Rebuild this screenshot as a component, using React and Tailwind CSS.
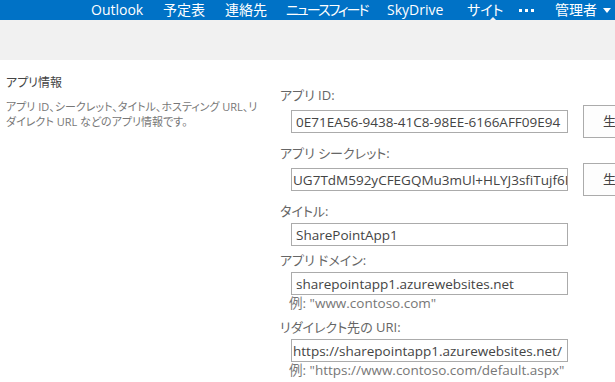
import React from "react";

const jp = "font-['Open_Sans','Noto_Sans_CJK_JP',sans-serif] [font-feature-settings:'palt']";

// widths measured from the suite bar: each item's slot includes the gap after it
const navItems = [
  { label: "Outlook", w: "w-[72px]" },
  { label: "予定表", w: "w-[62px]" },
  { label: "連絡先", w: "w-[61px]" },
  { label: "ニュースフィード", w: "w-[101px]" },
  { label: "SkyDrive", w: "w-[80px]" },
  { label: "サイト", w: "w-[51px]" },
];

function Field({ label, value, pad = "pl-[4px]", button, example }) {
  return (
    <div>
      <div className="text-[13px] leading-[18px] text-[#666]">{label}</div>
      {button ? (
        <div className="mt-[1px] flex items-center">
          <input
            readOnly
            value={value}
            className={`ml-[11px] h-[23px] w-[277px] border border-[#ababab] bg-white ${pad} text-[13.5px] text-[#444] outline-none`}
          />
          <button className="ml-[15px] h-[33px] shrink-0 border border-[#ababab] bg-[#fdfdfd] px-[19px] text-[13px] text-[#444] whitespace-nowrap">
            生成し直す
          </button>
        </div>
      ) : (
        <input
          readOnly
          value={value}
          className={`ml-[11px] mt-[3px] block h-[23px] w-[277px] border border-[#ababab] bg-white ${pad} text-[13.5px] text-[#444] outline-none`}
        />
      )}
      {example && (
        <div className="ml-[9px] text-[13.5px] leading-[16px] text-[#777]">{example}</div>
      )}
    </div>
  );
}

export default function App() {
  return (
    <div className={`relative h-[382px] w-[615px] overflow-hidden bg-white ${jp}`}>
      {/* Suite bar */}
      <div className="flex h-5 items-center bg-[#0072c6] pl-[91px] text-[14px] leading-5 text-white">
        {navItems.map((item) => (
          <span key={item.label} className={`relative shrink-0 whitespace-nowrap ${item.w}`}>
            {item.label === "ニュースフィード" ? (
              <span className="tracking-[-2px]">{item.label}</span>
            ) : (
              item.label
            )}
            {item.label === "サイト" && (
              <span className="absolute bottom-[-1px] left-[22px] h-0 w-0 border-x-[4px] border-b-[4px] border-x-transparent border-b-[#f1f1f1]" />
            )}
          </span>
        ))}
        <span className="flex w-[37px] shrink-0 items-center gap-[3px] pl-[1px]">
          <span className="h-[3px] w-[3px] bg-white" />
          <span className="h-[3px] w-[3px] bg-white" />
          <span className="h-[3px] w-[3px] bg-white" />
        </span>
        <span className="flex shrink-0 items-center gap-[6px] whitespace-nowrap">
          管理者
          <span className="h-0 w-0 border-x-[4px] border-t-[5px] border-x-transparent border-t-white" />
        </span>
      </div>

      {/* Gray band */}
      <div className="h-10 bg-[#f1f1f1]" />

      {/* Content */}
      <div className="flex">
        <div className="w-[280px] shrink-0 pl-[6px]">
          <h2 className="mt-[14px] text-[12px] leading-[18px] text-[#444]">アプリ情報</h2>
          <p className="mt-[7px] whitespace-nowrap text-[11px] leading-[15px] text-[#777]">
            アプリ ID、シークレット、タイトル、ホスティング URL、リ
            <br />
            ダイレクト URL などのアプリ情報です。
          </p>
        </div>

        <div className="flex flex-col pt-[26px]">
          <Field label="アプリ ID:" value="0E71EA56-9438-41C8-98EE-6166AFF09E94" button />
          <div className="mt-[6px]">
            <Field
              label="アプリ シークレット:"
              value="UG7TdM592yCFEGQMu3mUl+HLYJ3sfiTujf6Kq2nW8="
              pad="pl-[1px]"
              button
            />
          </div>
          <div className="mt-[6px]">
            <Field label="タイトル:" value="SharePointApp1" />
          </div>
          <div className="mt-[5px]">
            <Field
              label="アプリ ドメイン:"
              value="sharepointapp1.azurewebsites.net"
              example={'例: "www.contoso.com"'}
            />
          </div>
          <div className="mt-[7px]">
            <Field
              label="リダイレクト先の URI:"
              value="https://sharepointapp1.azurewebsites.net/"
              pad="pl-[1px]"
              example={'例: "https://www.contoso.com/default.aspx"'}
            />
          </div>
        </div>
      </div>
    </div>
  );
}
